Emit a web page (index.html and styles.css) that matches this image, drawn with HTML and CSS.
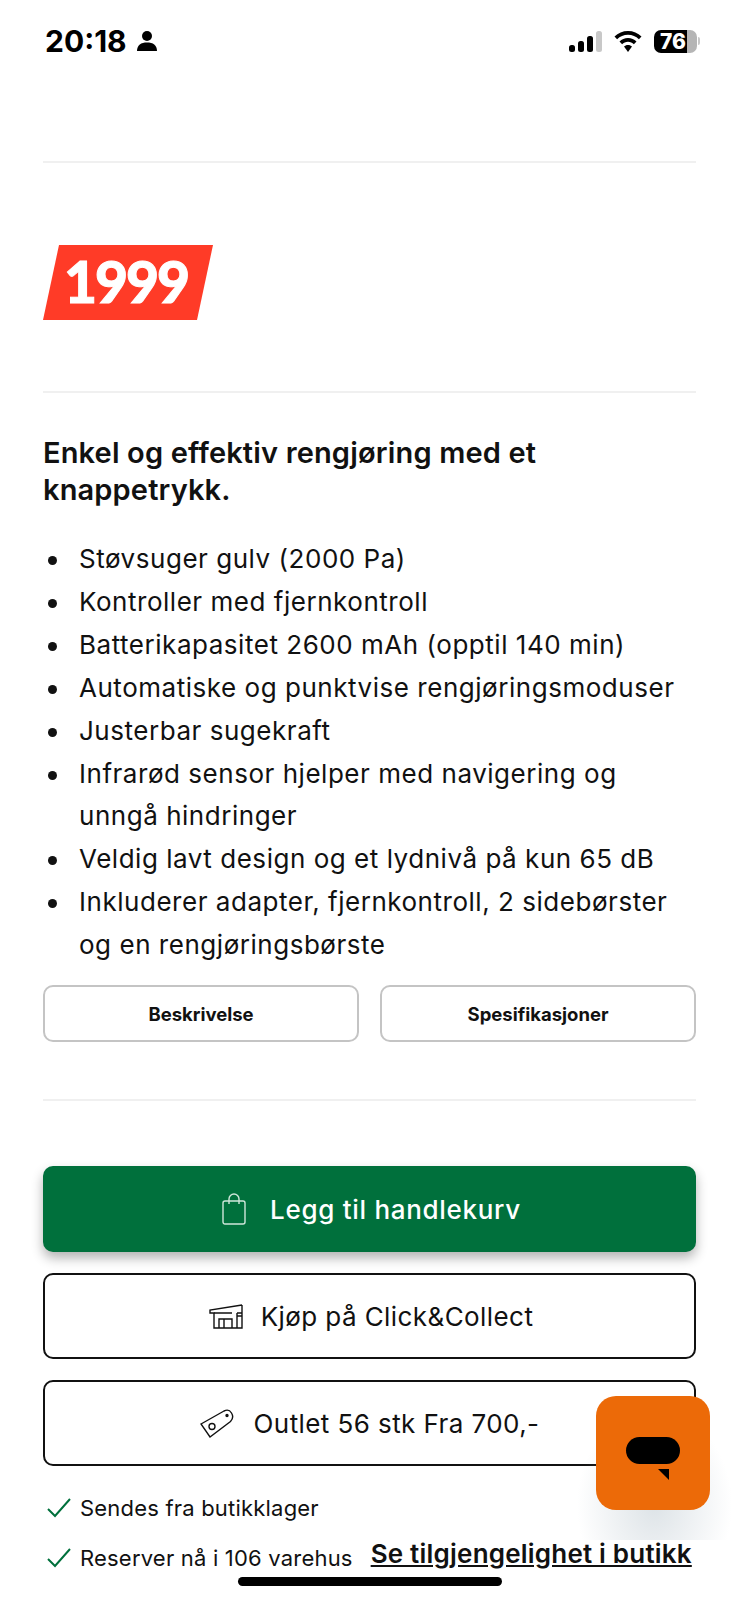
FILE: index.html
```html
<!DOCTYPE html>
<html lang="en">
<head>
    <meta charset="UTF-8">
    <meta name="viewport" content="width=device-width, initial-scale=1.0">
    <title>Robotstøvsuger</title>
    <link rel="stylesheet" href="styles.css">
</head>
<body>
    <div class="status-bar">
        <div class="status-left">
            <span class="clock">20:18</span>
            <svg class="person" width="20" height="22" viewBox="0 0 20 22"><circle cx="10" cy="6" r="5"/><path d="M0 21c0-6 4-8.500 10-8.500s10 2.500 10 8.500z"/></svg>
        </div>
        <div class="status-right">
            <svg width="33" height="21" viewBox="0 0 33 21"><rect x="0" y="14" width="6" height="7" rx="2.500"/><rect x="9" y="10" width="6" height="11" rx="2.500"/><rect x="18" y="5" width="6" height="16" rx="2.500"/><rect x="27" y="0" width="6" height="21" rx="2.500" fill="#c8c8c8"/></svg>
            <svg width="28" height="21" viewBox="0 0 28 21"><path d="M14 0C8.800 0 4 2 .5 5.500l2.600 2.700C6 5.300 9.800 3.700 14 3.700s8 1.600 10.900 4.500l2.600-2.700C24 2 19.200 0 14 0z"/><path d="M14 7c-3.300 0-6.300 1.300-8.500 3.500l2.600 2.700c1.500-1.500 3.600-2.500 5.900-2.500s4.400 1 5.900 2.500l2.600-2.700C20.300 8.300 17.300 7 14 7z"/><path d="M14 14c-1.600 0-3 .6-4 1.600l4 5.400 4-5.400c-1-1-2.400-1.600-4-1.600z"/></svg>
            <div class="battery"><div class="battery-body"><span class="battery-level">76</span></div><div class="battery-nub"></div></div>
        </div>
    </div>

    <div class="page">
        <hr class="divider">
        <div class="price-row">
            <div class="price">1999</div>
        </div>
        <hr class="divider">

        <h2 class="lead">Enkel og effektiv rengjøring med et knappetrykk.</h2>
        <ul class="features">
            <li>Støvsuger gulv (2000 Pa)</li>
            <li>Kontroller med fjernkontroll</li>
            <li>Batterikapasitet 2600 mAh (opptil 140 min)</li>
            <li>Automatiske og punktvise rengjøringsmoduser</li>
            <li>Justerbar sugekraft</li>
            <li>Infrarød sensor hjelper med navigering og unngå hindringer</li>
            <li>Veldig lavt design og et lydnivå på kun 65 dB</li>
            <li>Inkluderer adapter, fjernkontroll, 2 sidebørster og en rengjøringsbørste</li>
        </ul>

        <div class="tabs">
            <button type="button" class="tab">Beskrivelse</button>
            <button type="button" class="tab">Spesifikasjoner</button>
        </div>
        <hr class="divider divider-tabs">

        <div class="actions">
            <button type="button" class="btn btn-primary">
                <svg class="bag-icon" width="24" height="32" viewBox="0 0 24 32" fill="none" stroke="#cfe6da" stroke-width="1.400"><rect x="1" y="8" width="22" height="23" rx="2"/><path d="M7 11V6a5 5 0 0 1 10 0v5"/></svg>
                Legg til handlekurv
            </button>
            <button type="button" class="btn">
                <svg class="store-icon" width="35" height="25" viewBox="0 0 35 25" fill="none" stroke="#111" stroke-width="1.400"><path d="M33 1 1 6v3h4v15h28V1"/><path d="M10 24V15h13v9M15 15v9M5 9h18M28 9h5M28 9v15M33 12h-5"/></svg>
                Kjøp på Click&amp;Collect
            </button>
            <button type="button" class="btn">
                <svg class="tag-icon" width="34" height="29" viewBox="0 0 34 29" fill="none" stroke="#111" stroke-width="1.400"><path d="M1 15 24 2c3-1.500 6-.5 7.500 2s1.500 6-1 8.500L10 28z"/><circle cx="12" cy="17.500" r="3"/><circle cx="27" cy="6.500" r="1" fill="#111"/></svg>
                Outlet 56 stk Fra 700,-
            </button>
        </div>

        <div class="stock-line">
            <svg class="check" width="24" height="20" viewBox="0 0 24 20" fill="none" stroke="#00703c" stroke-width="2"><path d="M1 11l7 7L23 1"/></svg>
            <span>Sendes fra butikklager</span>
        </div>
        <div class="stock-line stock-line-last">
            <svg class="check" width="24" height="20" viewBox="0 0 24 20" fill="none" stroke="#00703c" stroke-width="2"><path d="M1 11l7 7L23 1"/></svg>
            <span>Reserver nå i 106 varehus</span>
            <a class="stock-link" href="#">Se tilgjengelighet i butikk</a>
        </div>
    </div>

    <div class="chat-shadow"></div>
    <div class="chat-button">
        <div class="chat-bubble"></div>
        <svg class="chat-tail" width="11" height="11" viewBox="0 0 11 11"><path d="M0 0h11v11z"/></svg>
    </div>
    <div class="home-indicator"></div>
</body>
</html>
```

FILE: styles.css
```css
html, body {
    margin: 0;
    padding: 0;
    background-color: #fff;
}
body {
    position: relative;
    width: 739px;
    height: 1600px;
    overflow: hidden;
    font-family: Inter, Arial, sans-serif;
    color: #111;
}
.status-bar {
    display: flex;
    justify-content: space-between;
    align-items: center;
    height: 82px;
    padding: 0 39px 0 45px;
    box-sizing: border-box;
}
.status-left, .status-right {
    display: flex;
    align-items: center;
}
.status-left {
    gap: 10px;
}
.status-right {
    gap: 12px;
}
.clock {
    font-size: 30px;
    font-weight: 700;
    color: #000;
}
.battery {
    display: flex;
    align-items: center;
    gap: 1px;
}
.battery-body {
    width: 43px;
    height: 23px;
    border-radius: 7px;
    background: linear-gradient(90deg, #000 76%, #b5b5b5 76%);
    display: flex;
    align-items: center;
    padding-left: 6px;
    box-sizing: border-box;
}
.battery-level {
    font-size: 21px;
    font-weight: 800;
    color: #fff;
}
.battery-nub {
    width: 2px;
    height: 8px;
    border-radius: 0 2px 2px 0;
    background-color: #c8c8c8;
}
.page {
    padding: 0 43px;
}
.divider {
    border: none;
    height: 2px;
    margin: 0;
    background-color: #f0f0f0;
}
.page > .divider:first-child {
    margin-top: 79px;
}
.price-row {
    padding: 82px 0 71px;
}
.price {
    display: flex;
    align-items: center;
    justify-content: center;
    width: 170px;
    height: 75px;
    padding: 0 4px 4px 0;
    box-sizing: border-box;
    clip-path: polygon(16px 0, 100% 0, 154px 100%, 0 100%);
    background-color: #ff3b27;
    color: #fff;
    font-family: Lato, Inter, sans-serif;
    font-size: 57px;
    font-weight: 900;
    letter-spacing: -2px;
    -webkit-text-stroke: 1px #fff;
}
.lead {
    margin: 41px 0 0;
    font-size: 29px;
    line-height: 37px;
    font-weight: 600;
    letter-spacing: 0.15px;
}
.features {
    margin: 30px 0 0;
    padding: 0 0 0 36px;
    list-style: none;
    font-size: 26px;
    line-height: 42.900px;
    letter-spacing: 0.53px;
}
.features li {
    position: relative;
}
.features li::before {
    content: "";
    position: absolute;
    left: -31px;
    top: 18px;
    width: 9px;
    height: 9px;
    border-radius: 50%;
    background-color: #111;
}
.tabs {
    display: flex;
    gap: 21px;
    margin-top: 18px;
}
.tab {
    flex: 1;
    height: 57px;
    border: 2px solid #c4c4c4;
    border-radius: 10px;
    background-color: #fff;
    color: #111;
    font-family: Inter, Arial, sans-serif;
    font-size: 18.500px;
    font-weight: 700;
}
.divider-tabs {
    margin-top: 57px;
}
.actions {
    display: flex;
    flex-direction: column;
    gap: 21px;
    margin-top: 65px;
}
.btn {
    display: flex;
    align-items: center;
    justify-content: center;
    gap: 20px;
    height: 86px;
    border: 2px solid #111;
    border-radius: 10px;
    background-color: #fff;
    color: #111;
    font-family: Inter, Arial, sans-serif;
    font-size: 26px;
    letter-spacing: 0.42px;
}
.btn-primary {
    gap: 24px;
    padding-left: 10px;
    border: none;
    background-color: #00703c;
    color: #fff;
    font-weight: 500;
    letter-spacing: 0.7px;
    box-shadow: 0 6px 12px rgba(0, 0, 0, 0.3);
}
.store-icon {
    margin: 0 -3px 0 3px;
}
.stock-line {
    display: flex;
    align-items: center;
    gap: 9px;
    margin-top: 27px;
    padding-left: 4px;
    font-size: 22px;
    line-height: 30px;
    letter-spacing: 0.2px;
    white-space: nowrap;
}
.stock-line-last {
    margin-top: 20px;
}
.stock-link {
    margin-left: 9px;
    margin-top: -8px;
    color: #111;
    font-size: 26px;
    font-weight: 600;
    letter-spacing: 0.2px;
}
.chat-shadow {
    position: absolute;
    left: 570px;
    top: 1400px;
    width: 169px;
    height: 140px;
    background: radial-gradient(ellipse at 50% 75%, rgba(170, 185, 195, 0.4), rgba(255, 255, 255, 0) 65%);
}
.chat-button {
    position: absolute;
    left: 596px;
    top: 1396px;
    width: 114px;
    height: 114px;
    border-radius: 20px;
    background-color: #ec6a08;
}
.chat-bubble {
    position: absolute;
    left: 30px;
    top: 41px;
    width: 54px;
    height: 27px;
    border-radius: 14px;
    background-color: #000;
}
.chat-tail {
    position: absolute;
    left: 62px;
    top: 73px;
}
.home-indicator {
    position: absolute;
    left: 238px;
    top: 1577px;
    width: 264px;
    height: 9px;
    border-radius: 5px;
    background-color: #000;
}
```
